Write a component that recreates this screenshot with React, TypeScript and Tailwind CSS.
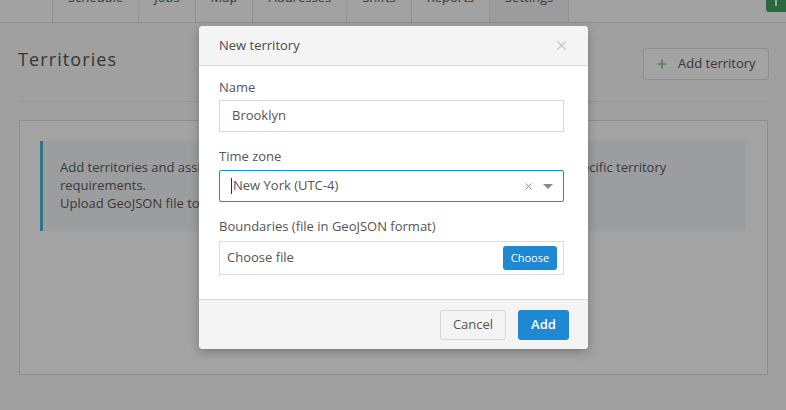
import { X, Plus } from 'lucide-react';

const tabs = ['Schedule', 'Jobs', 'Map', 'Addresses', 'Shifts', 'Reports', 'Settings'];

const App = () => {
  return (
    <div className="relative h-[410px] w-[786px] overflow-hidden bg-[#fafafa] text-[13px] text-[#555] font-['Open_Sans',sans-serif]">
      {/* top nav, scrolled partly out of view */}
      <div className="flex h-[23px] items-end border-b border-[#dfdfdf] bg-[#fdfdfd]">
        <div className="-mt-[22px] ml-[52px] flex h-[45px] border-l border-[#e6e6e6]">
          {tabs.map((tab) => (
            <div
              key={tab}
              className={`flex h-full items-center border-r border-[#e6e6e6] px-[15px] text-[13px] text-[#5a5a5a] ${
                tab === 'Settings' ? 'bg-[#f4f4f4]' : ''
              }`}
            >
              <span className="relative top-[-2px]">{tab}</span>
            </div>
          ))}
        </div>
        <div className="ml-auto flex h-[36px] w-[20px] self-start -mt-[24px] justify-center rounded-bl-[3px] bg-[#43a560]">
          <div className="mt-[24px] h-[6px] w-[2px] bg-white" />
        </div>
      </div>

      <div className="px-[18px]">
        <div className="flex h-[78px] items-start justify-between">
          <h1 className="mt-[23px] text-[18px] leading-[27px] tracking-[1.1px] text-[#555]">Territories</h1>
          <button className="-mr-[1px] mt-[25px] flex h-[32px] w-[126px] items-center gap-[9px] rounded-[4px] border border-[#dedede] bg-white pl-[11px] text-[13px] text-[#555]">
            <Plus size={14} strokeWidth={2} className="text-[#45bf4d]" />
            Add territory
          </button>
        </div>
        <div className="border-t border-[#e9e9e9]" />

        <div className="ml-[1px] mt-[18px] h-[255px] border border-[#dedede] bg-white px-[20px] pt-[20px]">
          <div className="h-[90px] w-[706px] border-l-[3px] border-[#46b8d8] bg-[#f4f6f9] pl-[17px] pt-[17px] leading-[18px] text-[#5a5a5a]">
            Add territories and assign workers to them so that jobs are dispatched according to specific territory
            <br />
            requirements.
            <br />
            Upload GeoJSON file to set territory boundaries.
          </div>
        </div>
      </div>

      {/* modal backdrop */}
      <div className="absolute inset-0 bg-black/[0.36]" />

      {/* modal */}
      <div className="absolute left-[199px] top-[26px] w-[389px] overflow-hidden rounded-[4px] bg-white shadow-[0_3px_10px_rgba(0,0,0,0.25)]">
        <div className="flex h-[40px] items-center justify-between border-b border-[#dcdcdc] bg-[#f4f4f4] pl-[20px] pr-[19px]">
          <span className="text-[13px] text-[#4a4a4a]">New territory</span>
          <X size={15} strokeWidth={1.8} className="text-[#c4c4c4]" />
        </div>

        <div className="px-[20px] pb-[24px] pt-[12px]">
          <div className="h-[18px] leading-[18px] text-[13px] text-[#555]">Name</div>
          <div className="mt-[4px] flex h-[32px] w-[345px] items-center border border-[#d9d9d9] px-[12px] text-[13px] text-[#555]">
            Brooklyn
          </div>

          <div className="mt-[15px] h-[18px] leading-[18px] text-[13px] text-[#555]">Time zone</div>
          <div className="mt-[5px] flex h-[32px] w-[345px] items-center rounded-[2px] border border-[#1e88d2] pl-[11px] pr-[10px] text-[13px] text-[#555]">
            <span className="mr-[1px] h-[16px] w-[1px] bg-[#333]" />
            New York (UTC-4)
            <X size={11} strokeWidth={2} className="ml-auto text-[#8a8a8a]" />
            <svg width="10" height="5" viewBox="0 0 10 5" className="ml-[9px]">
              <path d="M0 0 L10 0 L5 5 Z" fill="#8a8a8a" />
            </svg>
          </div>

          <div className="mt-[15px] h-[18px] leading-[18px] text-[13px] text-[#555]">
            Boundaries (file in GeoJSON format)
          </div>
          <div className="mt-[6px] flex h-[34px] w-[345px] items-center border border-[#dcdcdc] pl-[7px] pr-[6px] text-[13px] text-[#555]">
            Choose file
            <button className="ml-auto h-[24px] w-[54px] rounded-[3px] bg-[#1e88d2] text-[11px] text-white">Choose</button>
          </div>
        </div>

        <div className="flex h-[50px] items-start justify-end gap-[12px] border-t border-[#dcdcdc] bg-[#f4f4f4] pr-[19px] pt-[10px]">
          <button className="h-[30px] w-[66px] rounded-[3px] border border-[#d6d6d6] bg-[#f4f4f4] text-[13px] text-[#555]">
            Cancel
          </button>
          <button className="h-[30px] w-[51px] rounded-[3px] bg-[#1e88d2] text-[13px] font-semibold text-white">Add</button>
        </div>
      </div>
    </div>
  );
};

export default App;
